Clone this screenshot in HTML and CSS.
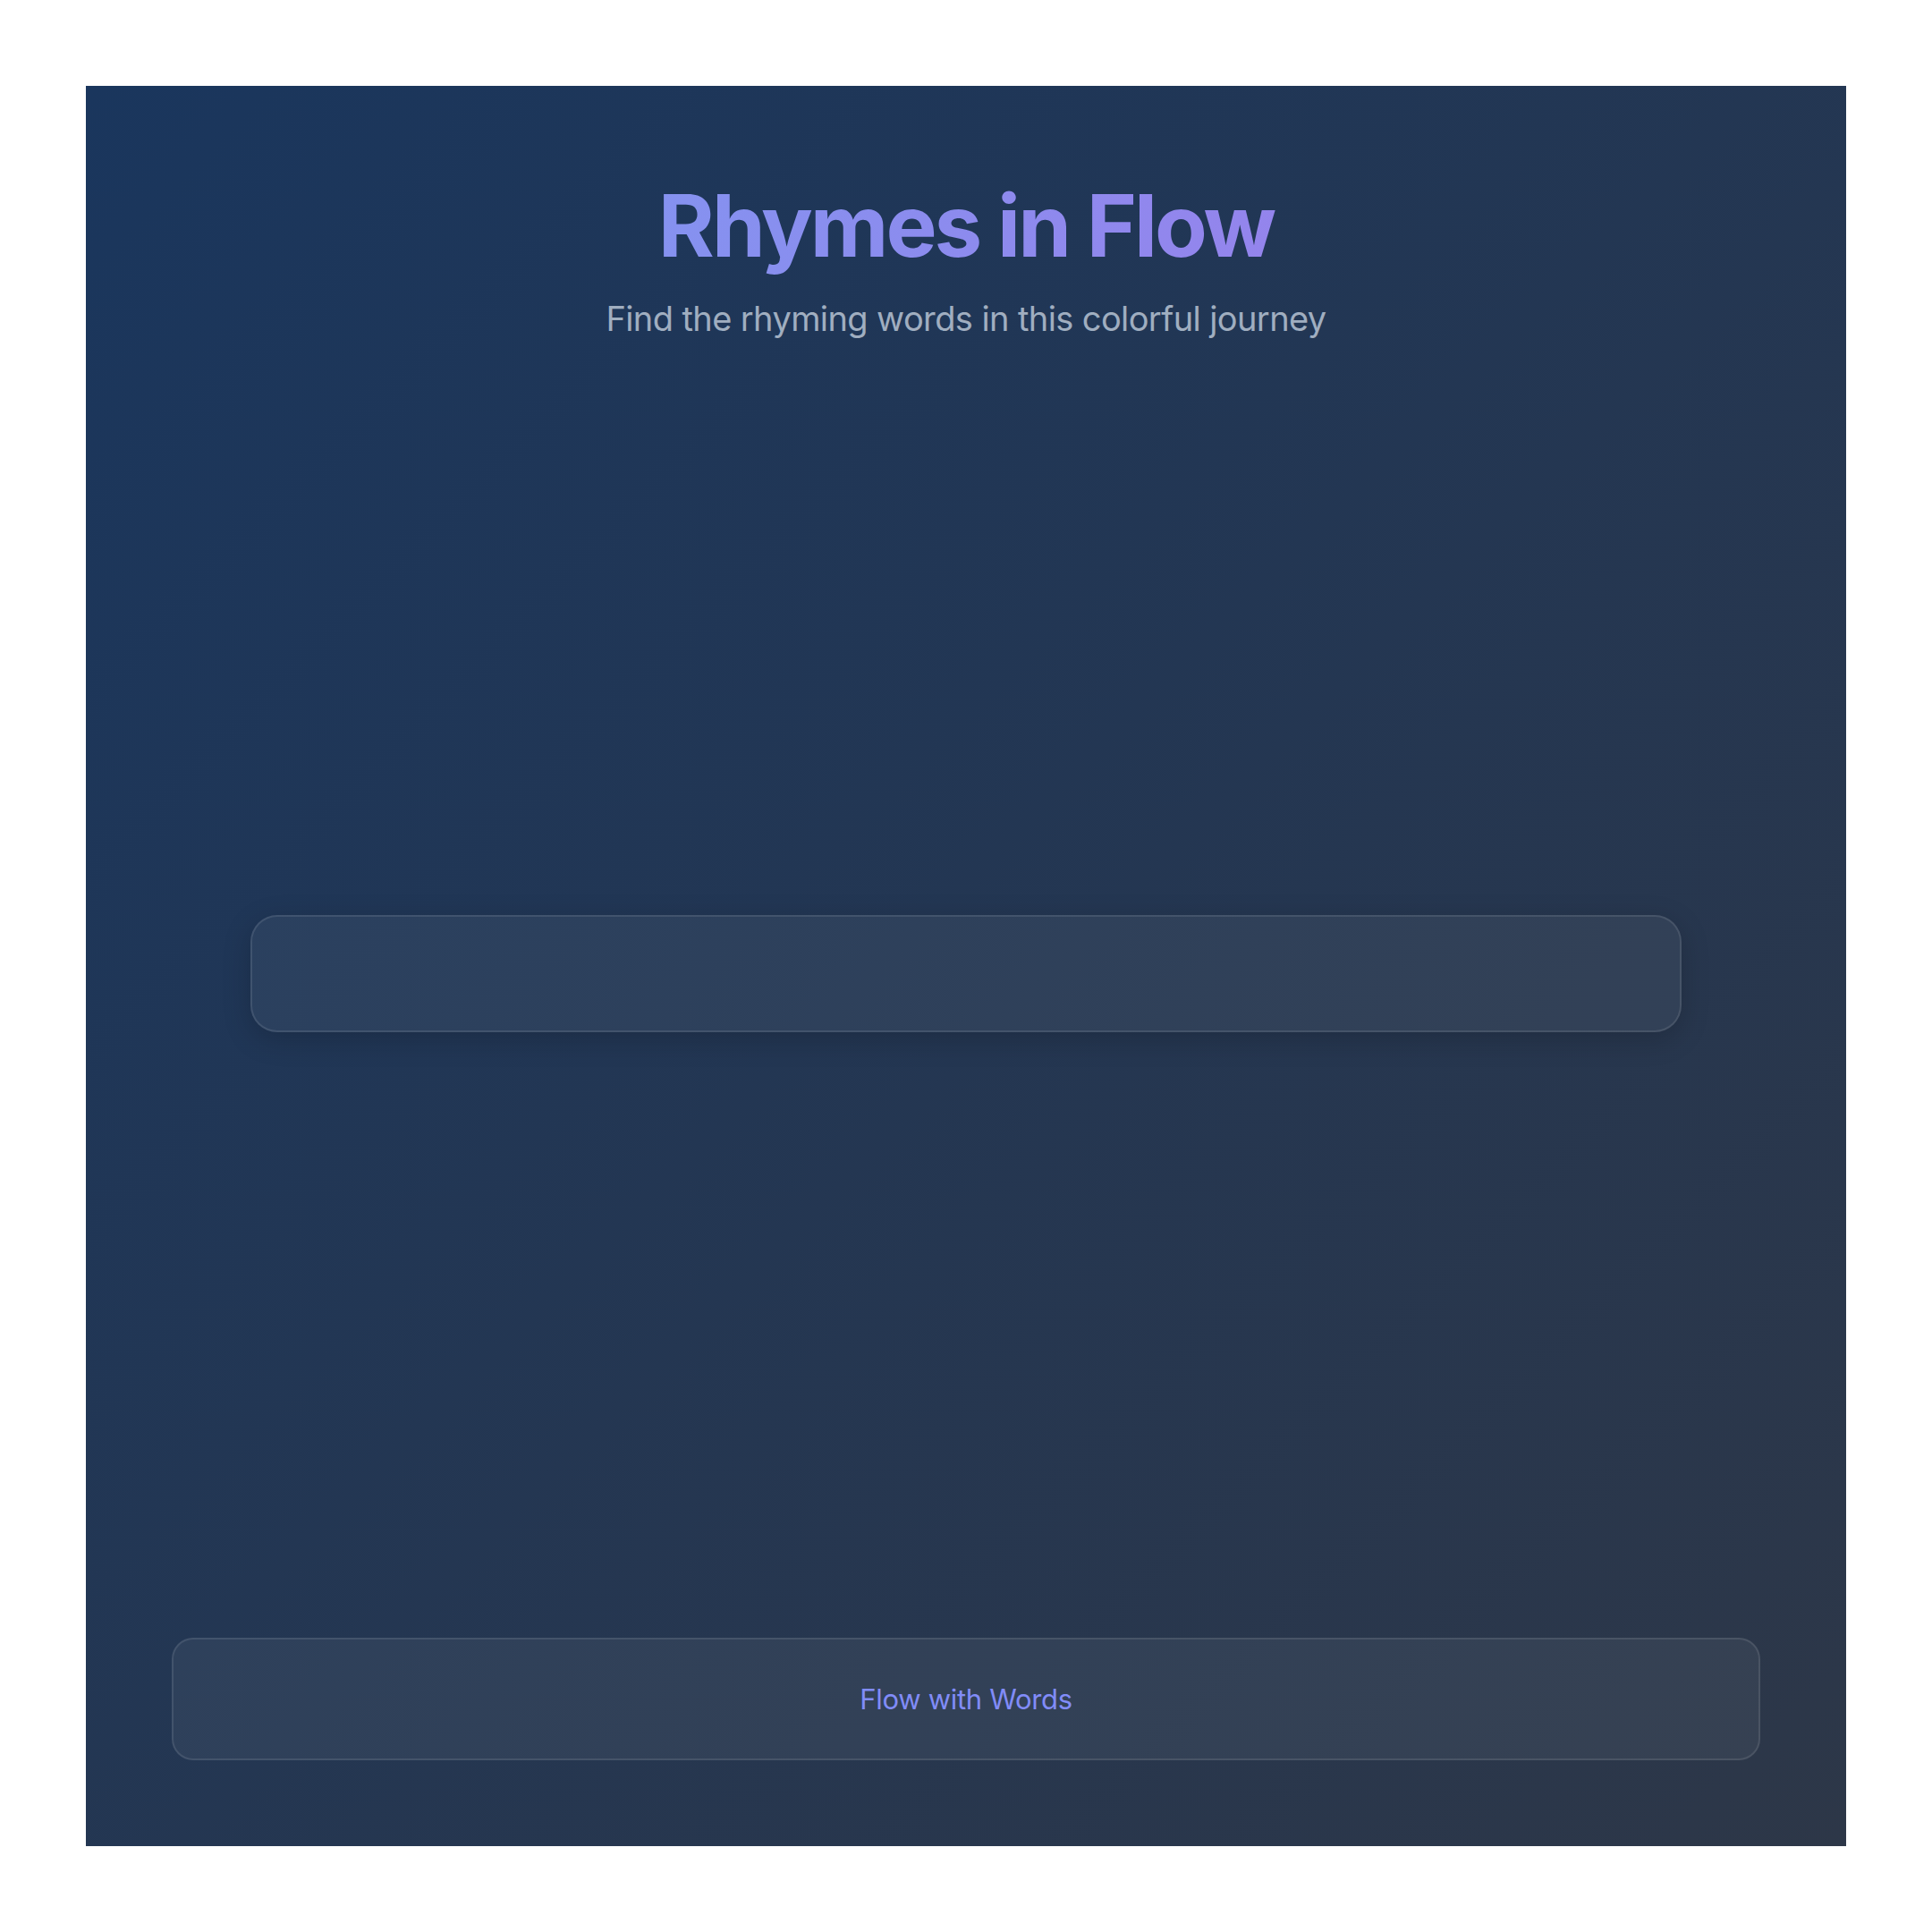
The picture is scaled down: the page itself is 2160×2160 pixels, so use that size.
FILE: index.html
```html
<!DOCTYPE html>
<html lang="en">
<head>
<meta charset="utf-8">
<title>Rhymes in Flow</title>
<link rel="stylesheet" href="styles.css">
</head>
<body>
<div class="app">
  <header class="header">
    <h1 class="title">Rhymes in Flow</h1>
    <p class="subtitle">Find the rhyming words in this colorful journey</p>
  </header>
  <main class="main">
    <div class="card"></div>
  </main>
  <footer class="footer">
    <span class="footer-text">Flow with Words</span>
  </footer>
</div>
</body>
</html>
```

FILE: styles.css
```css
* { box-sizing: border-box; }
html, body { margin: 0; padding: 0; background: #ffffff; }
body {
  padding: 96px;
  font-family: Inter, "Noto Sans", "Liberation Sans", sans-serif;
}
.app {
  height: 1968px;
  padding: 96px;
  display: flex;
  flex-direction: column;
  background: linear-gradient(135deg, #1a365d 0%, #2d3748 100%);
}
.header {
  text-align: center;
}
.title {
  margin: 0;
  padding-top: 3px;
  font-size: 96px;
  line-height: 1.2;
  font-weight: 700;
  letter-spacing: -3px;
  background: linear-gradient(90deg, #7a9cf2, #9f7aea);
  -webkit-background-clip: text;
  background-clip: text;
  color: transparent;
}
.subtitle {
  margin: 16px 0 0;
  font-size: 38px;
  line-height: 60px;
  letter-spacing: -0.6px;
  color: #a0aec0;
}
.main {
  flex: 1;
  display: flex;
  align-items: center;
  justify-content: center;
  padding-bottom: 41px;
}
.card {
  width: 1600px;
  height: 131px;
  border-radius: 30px;
  border: 2px solid rgba(255, 255, 255, 0.1);
  background: rgba(255, 255, 255, 0.05);
  box-shadow: 0 8px 32px rgba(0, 0, 0, 0.18);
}
.footer {
  height: 137px;
  border-radius: 24px;
  border: 2px solid rgba(255, 255, 255, 0.1);
  background: rgba(255, 255, 255, 0.05);
  display: flex;
  align-items: center;
  justify-content: center;
}
.footer-text {
  font-size: 31px;
  letter-spacing: -0.3px;
  color: #818cf8;
}
```
